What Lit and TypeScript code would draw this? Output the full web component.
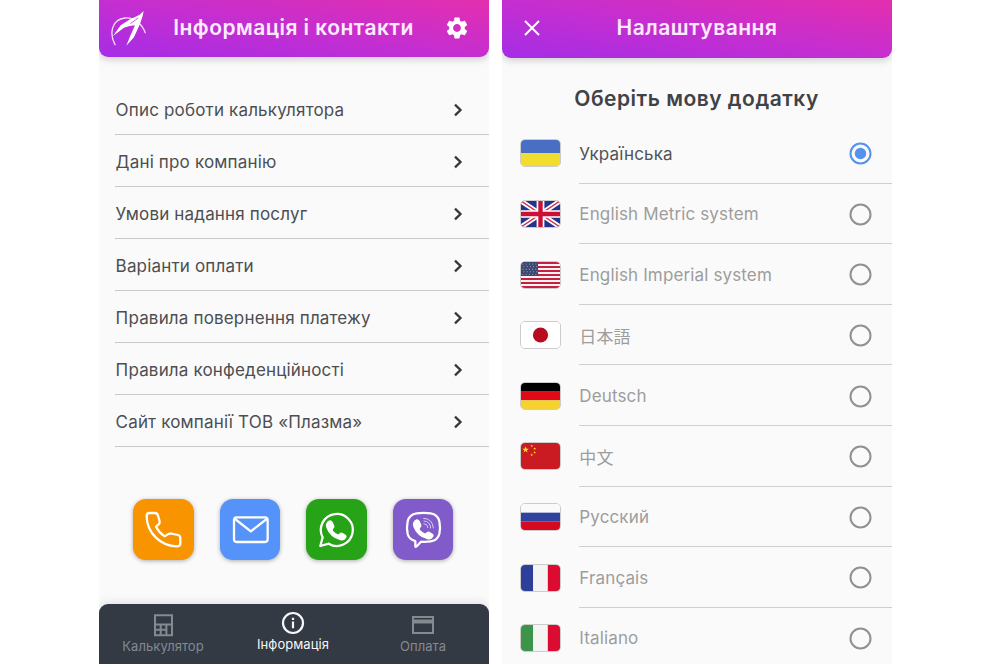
import { LitElement, html, svg, css } from "lit";
import { customElement, state } from "lit/decorators.js";

const HANDSET =
  "M60 75 Q63 66 71 64 Q76 63 80 69 L85 80 Q87 85 82 89 Q79 92 81 95 Q87 102 95 106 Q98 107 101 103 Q105 99 109 101 L119 107 Q124 110 121 116 Q114 127 103 124 Q71 114 61 86 Q59 80 60 75 Z";

const GEAR =
  "M19.14 12.94c.04-.3.06-.61.06-.94 0-.32-.02-.64-.07-.94l2.03-1.58c.18-.14.23-.41.12-.61l-1.92-3.32c-.12-.22-.37-.29-.59-.22l-2.39.96c-.5-.38-1.03-.7-1.62-.94l-.36-2.54c-.04-.24-.24-.41-.48-.41h-3.84c-.24 0-.43.17-.47.41l-.36 2.54c-.59.24-1.13.57-1.62.94l-2.39-.96c-.22-.08-.47 0-.59.22L2.74 8.87c-.12.21-.08.47.12.61l2.03 1.58c-.05.3-.09.63-.09.94s.02.64.07.94l-2.03 1.58c-.18.14-.23.41-.12.61l1.92 3.32c.12.22.37.29.59.22l2.39-.96c.5.38 1.03.7 1.62.94l.36 2.54c.05.24.24.41.48.41h3.84c.24 0 .44-.17.47-.41l.36-2.54c.59-.24 1.13-.56 1.62-.94l2.39.96c.22.08.47 0 .59-.22l1.92-3.32c.12-.22.07-.47-.12-.61l-2.01-1.58zM12 15.6c-1.98 0-3.6-1.62-3.6-3.6s1.62-3.6 3.6-3.6 3.6 1.62 3.6 3.6-1.62 3.6-3.6 3.6z";

const tiles = [
  {
    name: "phone",
    art: svg`<path class="line" d="M49 42 H66 Q73 42 75 50 L80 67 Q81 73 76 77 L69 83 Q78 101 95 112 L104 106 Q108 103 116 104 L135 108 Q142 110 142 117 V134 Q142 142 131 142 C85 142 41 103 41 51 Q41 42 49 42 Z"/>`,
  },
  {
    name: "mail",
    art: svg`<rect class="line" x="42" y="55" width="101" height="74" rx="8"/><path class="line" d="M45 60 L92.500 97 L140 60"/>`,
  },
  {
    name: "whatsapp",
    art: svg`<path class="line" d="M43 141 L50 115 A48 48 0 1 1 68 134 Z"/><path class="fill" d=${HANDSET}/>`,
  },
  {
    name: "viber",
    art: svg`<path class="line" d="M67 142 V126 Q48 121 44 105 Q40 86 44 67 Q49 46 71 43 Q92 40 113 43 Q134 46 139 67 Q143 86 139 105 Q134 124 113 127 Q98 129 84 128 L72 141 Q68 145 67 142 Z"/>
      <path class="fill" d=${HANDSET} transform="translate(0 -3)"/>
      <path class="thin" d="M93 74 Q104 75 105 86 M93 66 Q112 67 113 87 M92 58 Q119 59 121 87"/>`,
  },
];

const menu = [
  "Опис роботи калькулятора",
  "Дані про компанію",
  "Умови надання послуг",
  "Варіанти оплати",
  "Правила повернення платежу",
  "Правила конфеденційності",
  "Сайт компанії ТОВ «Плазма»",
];

const star = (cx: number, cy: number, r: number) => {
  const pts = Array.from({ length: 10 }, (_, i) => {
    const a = -Math.PI / 2 + (i * Math.PI) / 5;
    const q = i % 2 ? r * 0.4 : r;
    return `${(cx + q * Math.cos(a)).toFixed(2)},${(cy + q * Math.sin(a)).toFixed(2)}`;
  }).join(" ");
  return svg`<polygon points=${pts} fill="#ffdf20"/>`;
};

const rows3 = (a: string, b: string, c: string) => svg`
  <rect width="40" height="9" fill=${a}/><rect y="9" width="40" height="9" fill=${b}/><rect y="18" width="40" height="9" fill=${c}/>`;
const cols3 = (a: string, b: string, c: string) => svg`
  <rect width="12.500" height="27" fill=${a}/><rect x="12.500" width="15" height="27" fill=${b}/><rect x="27.500" width="12.500" height="27" fill=${c}/>`;

const languages = [
  { id: "uk", label: "Українська", flag: svg`<rect width="40" height="13.500" fill="#486fc3"/><rect y="13.500" width="40" height="13.500" fill="#f2dc30"/>` },
  {
    id: "en-m", label: "English Metric system",
    flag: svg`<rect width="40" height="27" fill="#24338c"/>
      <path d="M0 0 L40 27 M40 0 L0 27" stroke="#fff" stroke-width="5"/>
      <path d="M0 0 L40 27 M40 0 L0 27" stroke="#d22c4c" stroke-width="1.500"/>
      <path d="M20 0 V27 M0 13.500 H40" stroke="#fff" stroke-width="8"/>
      <path d="M20 0 V27 M0 13.500 H40" stroke="#cb1034" stroke-width="4.500"/>`,
  },
  {
    id: "en-i", label: "English Imperial system",
    flag: svg`<rect width="40" height="27" fill="#f7f3f4"/>
      ${[0, 1, 2, 3, 4, 5, 6].map((i) => svg`<rect y=${(i * 54) / 13} width="40" height="2.080" fill="#c4203f"/>`)}
      <rect width="17.500" height="14.500" fill="#3b4870"/>
      ${[0, 1, 2, 3, 4].map((r) => [0, 1, 2, 3, 4].map((c) => svg`<circle cx=${2 + c * 3.3 + (r % 2)} cy=${2 + r * 2.7} r=".55" fill="#aeb6cc"/>`))}`,
  },
  { id: "ja", label: "日本語", flag: svg`<rect width="40" height="27" fill="#fff"/><circle cx="20" cy="13.500" r="7.800" fill="#b80a20"/>` },
  { id: "de", label: "Deutsch", flag: rows3("#000", "#df0a17", "#f5d22d") },
  {
    id: "zh", label: "中文",
    flag: svg`<rect width="40" height="27" fill="#ca1b22"/>
      ${star(4.7, 7, 3.5)}${star(11, 3, 1.5)}${star(14, 5.8, 1.5)}${star(14, 9.8, 1.5)}${star(11, 12.5, 1.5)}`,
  },
  { id: "ru", label: "Русский", flag: rows3("#fafafa", "#2e429e", "#d50920") },
  { id: "fr", label: "Français", flag: cols3("#2d3f98", "#f4f4f4", "#dc0b31") },
  { id: "it", label: "Italiano", flag: cols3("#3c9448", "#f4f4f4", "#dc0b31") },
];

const tabs = [
  {
    label: "Калькулятор",
    icon: svg`<path d="M4 2.200 H21 V22.200 H4 Z M4 11.500 H21 M9.700 11.500 V22.200 M15.400 11.500 V22.200 M4 16.800 H15.400"/>`,
  },
  {
    label: "Інформація",
    icon: svg`<circle cx="12" cy="12" r="10"/><path d="M12 10.500 V17.200 M12 6.700 V8.900"/>`,
  },
  {
    label: "Оплата",
    icon: svg`<path d="M2 4 H22 V20 H2 Z"/><path d="M2 8.500 H22" stroke-width="4"/>`,
  },
];

@customElement("app-root")
export class AppRoot extends LitElement {
  @state() private selected = "uk";
  @state() private tab = 1;

  static styles = css`
    :host {
      display: flex;
      gap: 13px;
      width: 1000px;
      height: 667px;
      box-sizing: border-box;
      padding-left: 99px;
      background: #fff;
      overflow: hidden;
      font-family: Inter, "Noto Sans CJK JP", sans-serif;
      color: #4c4e52;
    }
    svg { display: block; }
    .panel {
      width: 390px;
      height: 664px;
      background: #fafafa;
      display: flex;
      flex-direction: column;
      overflow: hidden;
    }
    .bar {
      flex: none;
      height: 57px;
      display: grid;
      grid-template-columns: 60px 1fr 64px;
      align-items: center;
      justify-items: center;
      box-sizing: border-box;
      padding-bottom: 2px;
      border-radius: 0 0 9px 9px;
      background: linear-gradient(to top right, #a52de6 0%, #c52ed0 50%, #e42fae 100%);
      box-shadow: 0 3px 7px rgba(0, 0, 0, 0.16);
      color: #fdeaff;
    }
    .bar.tall { height: 58px; grid-template-columns: 60px 1fr 60px; }
    .bar h1 { margin: 0; font-size: 21px; line-height: 28px; font-weight: 600; white-space: nowrap; }
    .info-title { letter-spacing: 0.45px; padding-left: 3px; }
    .set-title { letter-spacing: 0.5px; }
    .menu { padding: 26px 0 0 16px; }
    .menu-row {
      height: 52px;
      box-sizing: border-box;
      border-bottom: 1.5px solid #c9c9c9;
      display: flex;
      align-items: center;
      justify-content: space-between;
      padding: 2px 24.500px 0 0.600px;
      font-size: 17px;
      letter-spacing: 0.17px;
      white-space: nowrap;
    }
    .tiles { display: flex; gap: 26px; padding: 52px 0 0 34px; }
    .tile {
      width: 60.500px;
      height: 61px;
      border-radius: 13px;
      box-shadow: 0 1px 4px rgba(0, 0, 0, 0.32);
    }
    .phone { background: #f79400; }
    .mail { background: #5593fa; }
    .whatsapp { background: #27a317; }
    .viber { background: #805bc9; }
    .line { fill: none; stroke: #fff; stroke-width: 6.8; stroke-linejoin: round; stroke-linecap: round; }
    .thin { fill: none; stroke: #e7dcfa; stroke-width: 2.6; stroke-linecap: round; }
    .fill { fill: #fff; }
    .tabs {
      margin-top: auto;
      height: 60.500px;
      display: grid;
      grid-template-columns: repeat(3, 1fr);
      background: #333a44;
      border-radius: 9px 9px 0 0;
      box-shadow: 0 -2px 8px rgba(0, 0, 0, 0.1);
    }
    .tab {
      display: flex;
      flex-direction: column;
      align-items: center;
      padding: 9px 2px 0 0;
      gap: 1.500px;
      color: #858990;
      font-size: 13px;
      line-height: 16px;
      letter-spacing: 0.05px;
    }
    .tab svg { fill: none; stroke: currentColor; stroke-width: 2; }
    .tab.on { color: #f6f7f8; padding-top: 7px; }
    .tab.on svg { stroke-width: 2.2; }
    h2 {
      margin: 27px 0 0;
      padding-right: 1px;
      text-align: center;
      font-size: 21px;
      line-height: 28px;
      font-weight: 600;
      letter-spacing: 0.5px;
      color: #3f4246;
    }
    .langs { padding: 10px 0 0 18px; }
    .lang { height: 60.600px; display: flex; gap: 18px; }
    .flag {
      width: 41px;
      height: 28px;
      box-sizing: border-box;
      margin-top: 16.400px;
      border: 0.5px solid #ccc;
      border-radius: 5px;
      overflow: hidden;
    }
    .flag svg { width: 100%; height: 100%; }
    .choice {
      flex: 1;
      box-sizing: border-box;
      border-bottom: 1.5px solid #cfcfcf;
      display: flex;
      align-items: center;
      justify-content: space-between;
      padding: 1.800px 20px 0 0.300px;
      font-size: 17px;
      letter-spacing: 0.14px;
      color: #9d9d9d;
    }
    .lang:last-child .choice { border-bottom-color: transparent; }
    .lang.on .choice { color: #505256; }
    .dot { fill: none; stroke: #919191; stroke-width: 2; }
    .on .dot { stroke: #5792ea; }
    .core { fill: #5792ea; }
  `;

  render() {
    return html`
      <section class="panel">
        <header class="bar">
          <svg width="37.300" height="36" viewBox="61 26 112 108">
            <g fill="none" stroke="#f9dcfb" stroke-linecap="round">
              <path d="M76 130 C58 96 66 54 106 50 C134 47 157 68 167 94" stroke-width="4"/>
            </g>
            <path fill="#fff" d="M162 29 L159 44 L151 68 L133 108 L110 133 L122 103 L136 72 L120 74 L103 79 L70 104 L93 72 L119 55 L150 40 Z"/>
            <path d="M146 50 L122 67" stroke="#c63bcf" stroke-width="2.500"/>
          </svg>
          <h1 class="info-title">Інформація і контакти</h1>
          <svg width="26" height="26" viewBox="0 0 24 24" fill="#fff"><path d=${GEAR} /></svg>
        </header>
        <div class="menu">
          ${menu.map(
            (m) => html`<div class="menu-row">
              <span>${m}</span>
              <svg width="14" height="14" viewBox="0 0 14 14" fill="none" stroke="#35373b" stroke-width="2.300">
                <path d="M4 1.600 L9.500 7 L4 12.400" />
              </svg>
            </div>`
          )}
        </div>
        <div class="tiles">
          ${tiles.map((t) => html`<div class="tile ${t.name}"><svg width="61" height="61" viewBox="0 0 183 183">${t.art}</svg></div>`)}
        </div>
        <nav class="tabs">
          ${tabs.map(
            (t, i) => html`<div class="tab ${i === this.tab ? "on" : ""}" @click=${() => (this.tab = i)}>
              <svg width="24" height="24" viewBox="0 0 24 24">${t.icon}</svg>
              <span>${t.label}</span>
            </div>`
          )}
        </nav>
      </section>
      <section class="panel">
        <header class="bar tall">
          <svg width="18" height="18" viewBox="0 0 18 18" stroke="#fff" stroke-width="2"><path d="M2 2 L16 16 M16 2 L2 16" /></svg>
          <h1 class="set-title">Налаштування</h1>
        </header>
        <h2>Оберіть мову додатку</h2>
        <div class="langs">
          ${languages.map(
            (l) => html`<div class="lang ${l.id === this.selected ? "on" : ""}" @click=${() => (this.selected = l.id)}>
              <div class="flag"><svg viewBox="0 0 40 27" preserveAspectRatio="none">${l.flag}</svg></div>
              <div class="choice">
                <span>${l.label}</span>
                <svg width="23" height="23" viewBox="0 0 23 23">
                  <circle class="dot" cx="11.500" cy="11.500" r="10" />
                  ${l.id === this.selected ? svg`<circle class="core" cx="11.500" cy="11.500" r="5.700"/>` : ""}
                </svg>
              </div>
            </div>`
          )}
        </div>
      </section>
    `;
  }
}
